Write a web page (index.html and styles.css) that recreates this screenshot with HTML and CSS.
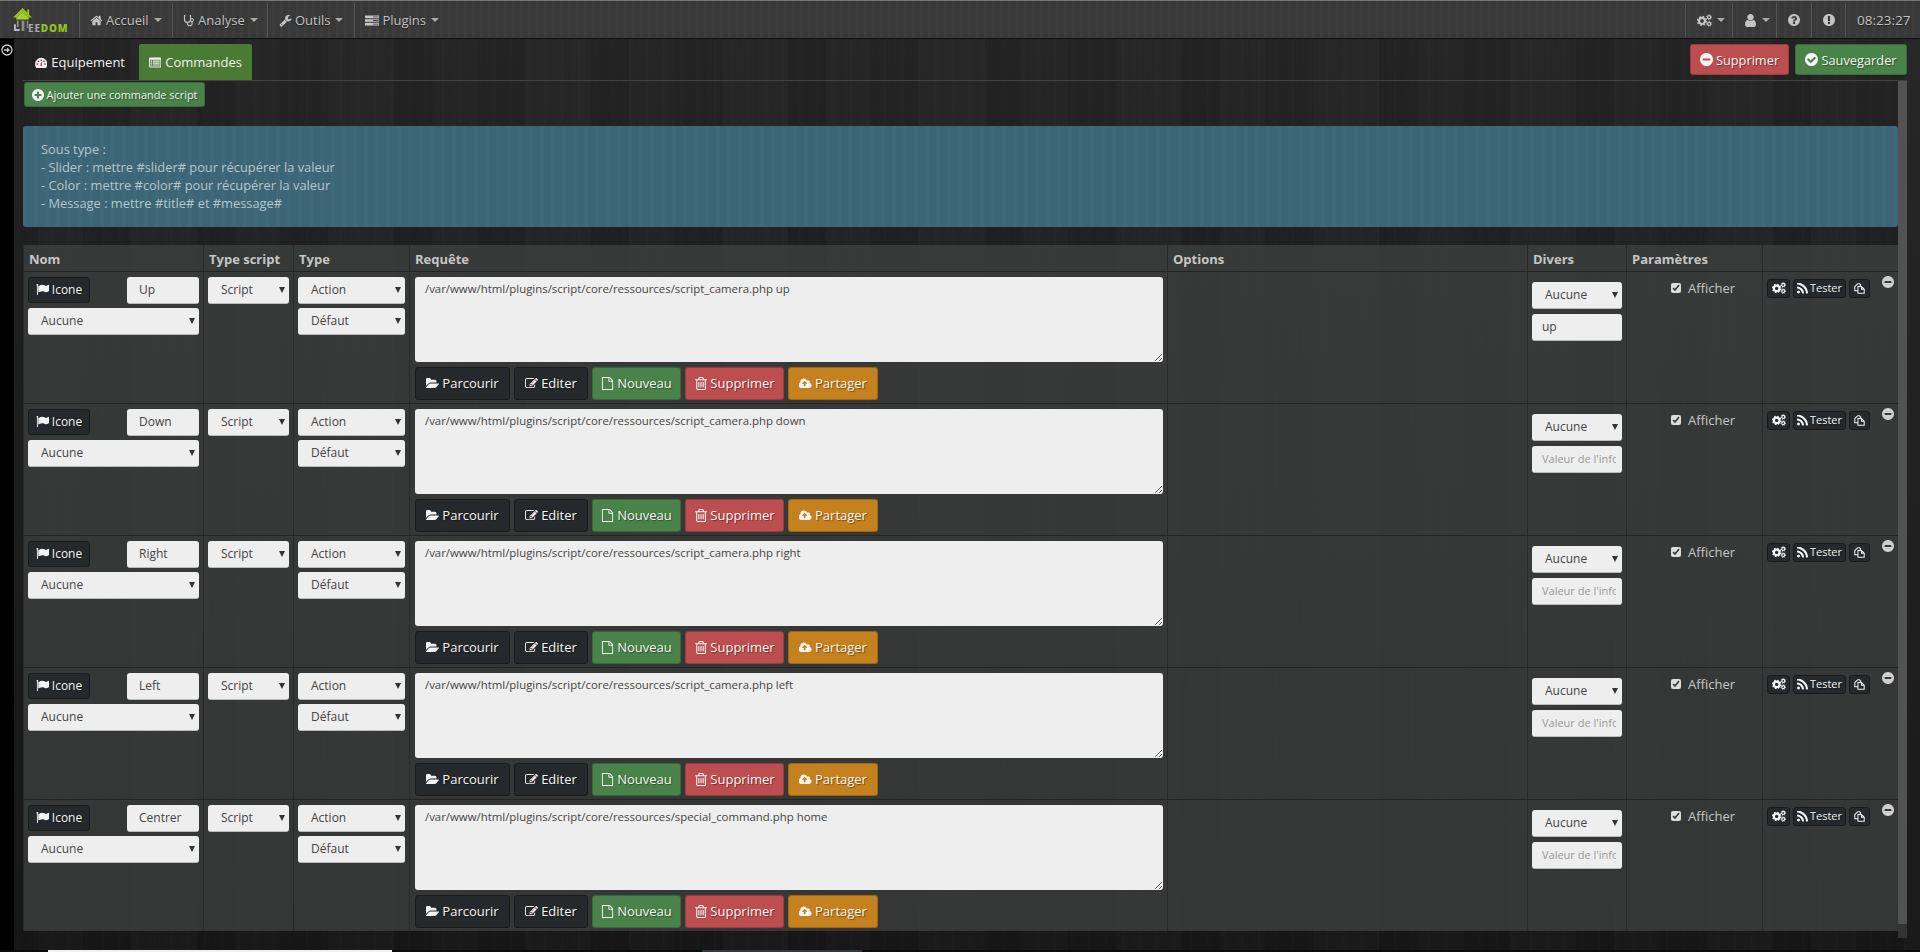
FILE: index.html
```html
<!DOCTYPE html>
<html lang="fr">
<head>
<meta charset="utf-8">
<title>Jeedom - Script</title>
<link rel="stylesheet" href="styles.css">
</head>
<body>
<svg class="defs" aria-hidden="true">
  <symbol id="i-home" viewBox="0 0 1792 1792"><path d="M1472 992v480q0 26-19 45t-45 19h-384v-384h-256v384h-384q-26 0-45-19t-19-45v-480q0-1 .5-3t.5-3l575-474 575 474q1 2 1 6zm223-69l-62 74q-8 9-21 11h-3q-13 0-21-7l-692-577-692 577q-12 8-24 7-13-2-21-11l-62-74q-8-10-7-23.500t11-21.500l719-599q32-26 76-26t76 26l244 204v-195q0-14 9-23t23-9h192q14 0 23 9t9 23v408l219 182q10 8 11 21.500t-7 23.500z"/></symbol>
  <symbol id="i-steth" viewBox="0 0 16 16"><path d="M3 1.500H2v5a4 4 0 0 0 8 0v-5H9M6 10.500v1.500a3 3 0 0 0 6 0V9.500" fill="none" stroke="currentColor" stroke-width="1.500"/><circle cx="12" cy="7.500" r="2" fill="none" stroke="currentColor" stroke-width="1.300"/></symbol>
  <symbol id="i-wrench" viewBox="0 0 1792 1792"><path d="M448 1472q0-26-19-45t-45-19-45 19-19 45 19 45 45 19 45-19 19-45zm644-420l-682 682q-37 37-90 37-52 0-91-37l-106-108q-38-36-38-90 0-53 38-91l681-681q39 98 114.500 173.500t173.500 114.500zm634-435q0 39-23 106-47 134-164.500 217.500t-258.500 83.500q-185 0-316.500-131.500t-131.500-316.500 131.500-316.500 316.500-131.500q58 0 121.500 16.500t107.500 46.500q16 11 16 28t-16 28l-293 169v224l193 107q5-3 79-48.500t135.500-81 70.500-35.500q15 0 23.500 10t8.500 25z"/></symbol>
  <symbol id="i-server" viewBox="0 0 16 11"><path d="M0 0h16v3H0zM0 4h16v3H0zM0 8h16v3H0zM9 1v1h6V1zM9 5v1h6V5zM9 9v1h6V9z" fill-rule="evenodd"/></symbol>
  <symbol id="i-gauge" viewBox="0 0 16 14"><path d="M8 1a8 8 0 0 0-8 8c0 1.800.6 3.400 1.500 4.700.2.200.4.300.7.300h11.600c.3 0 .5-.1.700-.3.900-1.300 1.500-2.900 1.500-4.700a8 8 0 0 0-8-8z"/><g fill="#23282a"><circle cx="3" cy="9" r="1"/><circle cx="4.500" cy="5.500" r="1"/><circle cx="8" cy="4" r="1"/><circle cx="11.500" cy="5.500" r="1"/><circle cx="13" cy="9" r="1"/></g><path d="M7 11.500l.8-5 1.200.2-.3 5z" fill="#c22"/></symbol>
  <symbol id="i-list" viewBox="0 0 16 13"><path d="M0 1.500A1.500 1.500 0 0 1 1.500 0h13A1.500 1.500 0 0 1 16 1.500v10a1.500 1.500 0 0 1-1.500 1.500h-13A1.500 1.500 0 0 1 0 11.500z"/><path d="M1.200 3h13.600v8.800H1.200z" fill="#4a7a34"/><path d="M2 4h2v1.500H2zM5 4h9v1.500H5zM2 6.500h2V8H2zM5 6.500h9V8H5zM2 9h2v1.500H2zM5 9h9v1.500H5z" fill="#eee"/></symbol>
  <symbol id="i-plus" viewBox="128 128 1536 1536"><path d="M1344 960v-128q0-26-19-45t-45-19h-256v-256q0-26-19-45t-45-19h-128q-26 0-45 19t-19 45v256h-256q-26 0-45 19t-19 45v128q0 26 19 45t45 19h256v256q0 26 19 45t45 19h128q26 0 45-19t19-45v-256h256q26 0 45-19t19-45zm320-64q0 209-103 385.500t-279.500 279.500-385.500 103-385.500-103-279.500-279.500-103-385.500 103-385.500 279.500-279.500 385.500-103 385.500 103 279.500 279.500 103 385.500z"/></symbol>
  <symbol id="i-minus" viewBox="128 128 1536 1536"><path d="M1344 960v-128q0-26-19-45t-45-19h-768q-26 0-45 19t-19 45v128q0 26 19 45t45 19h768q26 0 45-19t19-45zm320-64q0 209-103 385.500t-279.500 279.500-385.500 103-385.500-103-279.500-279.500-103-385.500 103-385.500 279.500-279.500 385.500-103 385.500 103 279.500 279.500 103 385.500z"/></symbol>
  <symbol id="i-check" viewBox="128 128 1536 1536"><path d="M1412 734q0-28-18-46l-91-90q-19-19-45-19t-45 19l-408 407-226-226q-19-19-45-19t-45 19l-91 90q-18 18-18 46 0 27 18 45l362 362q19 19 45 19 27 0 46-19l543-543q18-18 18-45zm252 162q0 209-103 385.500t-279.500 279.500-385.500 103-385.500-103-279.500-279.500-103-385.500 103-385.500 279.500-279.500 385.500-103 385.500 103 279.500 279.500 103 385.500z"/></symbol>
  <symbol id="i-quest" viewBox="128 128 1536 1536"><path d="M1024 1376v-192q0-14-9-23t-23-9h-192q-14 0-23 9t-9 23v192q0 14 9 23t23 9h192q14 0 23-9t9-23zm256-672q0-88-55.500-163t-138.500-116-170-41q-243 0-371 213-15 24 8 42l132 100q7 6 19 6 16 0 25-12 53-68 86-92 34-24 86-24 48 0 85.500 26t37.500 59q0 38-20 61t-68 45q-63 28-115.500 86.500t-52.500 125.500v36q0 14 9 23t23 9h192q14 0 23-9t9-23q0-19 21.500-49.500t54.500-49.500q32-18 49-28.500t46-35 44.500-48 28-60.500 12.500-81zm384 192q0 209-103 385.500t-279.500 279.500-385.500 103-385.500-103-279.500-279.500-103-385.500 103-385.500 279.500-279.500 385.500-103 385.500 103 279.500 279.500 103 385.500z"/></symbol>
  <symbol id="i-excl" viewBox="128 128 1536 1536"><path d="M896 128q209 0 385.500 103t279.500 279.500 103 385.500-103 385.500-279.500 279.500-385.500 103-385.500-103-279.500-279.500-103-385.500 103-385.500 279.500-279.500 385.500-103zm128 1247v-190q0-14-9-23.500t-22-9.500h-192q-13 0-23 10t-10 23v190q0 13 10 23t23 10h192q13 0 22-9.500t9-23.500zm-2-344l18-621q0-12-10-18-10-8-24-8h-220q-14 0-24 8-10 6-10 18l17 621q0 10 10 17.500t24 7.500h185q14 0 23.500-7.500t10.500-17.500z"/></symbol>
  <symbol id="i-user" viewBox="256 128 1280 1536"><path d="M1536 1399q0 109-62.500 187t-150.500 78h-854q-88 0-150.500-78t-62.500-187q0-85 8.500-160.500t31.500-152 58.500-131 94-89 134.500-34.500q131 128 313 128t313-128q76 0 134.500 34.500t94 89 58.500 131 31.500 152 8.500 160.500zm-256-887q0 159-112.500 271.500t-271.500 112.500-271.500-112.500-112.500-271.500 112.500-271.500 271.500-112.500 271.500 112.500 112.500 271.500z"/></symbol>
  <symbol id="i-cogs" viewBox="0 0 18 15"><circle cx="6" cy="8" r="3.600" fill="none" stroke="currentColor" stroke-width="2.800"/><circle cx="6" cy="8" r="5.300" fill="none" stroke="currentColor" stroke-width="1.600" stroke-dasharray="2.100 2.060"/><circle cx="14.500" cy="3.500" r="1.900" fill="none" stroke="currentColor" stroke-width="1.500"/><circle cx="14.500" cy="11.500" r="1.900" fill="none" stroke="currentColor" stroke-width="1.500"/><circle cx="14.500" cy="3.500" r="3" fill="none" stroke="currentColor" stroke-width="1" stroke-dasharray="1.200 1.150"/><circle cx="14.500" cy="11.500" r="3" fill="none" stroke="currentColor" stroke-width="1" stroke-dasharray="1.200 1.150"/></symbol>
  <symbol id="i-flag" viewBox="0 128 1792 1536"><path d="M320 256q0 72-64 110v1266q0 13-9.500 22.500t-22.500 9.500h-64q-13 0-22.500-9.500t-9.500-22.500v-1266q-64-38-64-110 0-53 37.500-90.500t90.500-37.500 90.500 37.500 37.500 90.500zm1472 64v763q0 25-12.500 38.500t-39.500 27.500q-215 116-369 116-61 0-123.500-22t-108.500-48-115.500-48-142.500-22q-192 0-464 146-17 9-33 9-26 0-45-19t-19-45v-742q0-32 31-55 21-14 79-43 236-120 421-120 107 0 200 29t219 88q38 19 88 19 54 0 117.500-21t110-47 88-47 54.500-21q26 0 45 19t19 45z"/></symbol>
  <symbol id="i-folder" viewBox="0 192 1824 1408"><path d="M1815 952q0 31-31 66l-336 396q-43 51-120.500 86.500t-143.500 35.500h-1088q-34 0-60.500-13t-26.500-43q0-31 31-66l336-396q43-51 120.500-86.500t143.500-35.500h1088q34 0 60.500 13t26.500 43zm-343-344v160h-832q-94 0-197 47.500t-164 119.500l-337 396-5 6q0-4-.5-12.500t-.5-12.500v-960q0-92 66-158t158-66h320q92 0 158 66t66 158v32h544q92 0 158 66t66 158z"/></symbol>
  <symbol id="i-edit" viewBox="0 128 1800 1536"><path d="M888 1184l116-116-152-152-116 116v56h96v96h56zm440-720q-16-16-33 1l-350 350q-17 17-1 33t33-1l350-350q17-17 1-33zm80 594v190q0 119-84.500 203.500t-203.500 84.500h-832q-119 0-203.500-84.500t-84.500-203.500v-832q0-119 84.500-203.500t203.500-84.500h832q63 0 117 25 15 7 18 23 3 17-9 29l-49 49q-14 14-32 8-23-6-45-6h-832q-66 0-113 47t-47 113v832q0 66 47 113t113 47h832q66 0 113-47t47-113v-126q0-13 9-22l64-64q15-15 35-7t20 29zm-96-738l288 288-672 672h-288v-288zm444 132l-92 92-288-288 92-92q28-28 68-28t68 28l152 152q28 28 28 68t-28 68z"/></symbol>
  <symbol id="i-file" viewBox="128 0 1536 1792"><path d="M1596 380q28 28 48 76t20 88v1152q0 40-28 68t-68 28h-1344q-40 0-68-28t-28-68v-1600q0-40 28-68t68-28h896q40 0 88 20t76 48zm-444-244v376h376q-10-29-22-41l-313-313q-12-12-41-22zm384 1528v-1024h-416q-40 0-68-28t-28-68v-416h-768v1536h1280z"/></symbol>
  <symbol id="i-trash" viewBox="128 128 1408 1536"><path d="M704 736v576q0 14-9 23t-23 9h-64q-14 0-23-9t-9-23v-576q0-14 9-23t23-9h64q14 0 23 9t9 23zm256 0v576q0 14-9 23t-23 9h-64q-14 0-23-9t-9-23v-576q0-14 9-23t23-9h64q14 0 23 9t9 23zm256 0v576q0 14-9 23t-23 9h-64q-14 0-23-9t-9-23v-576q0-14 9-23t23-9h64q14 0 23 9t9 23zm128 724v-948h-896v948q0 22 7 40.500t14.500 27 10.500 8.500h832q3 0 10.500-8.500t14.500-27 7-40.500zm-672-1076h448l-48-117q-7-9-17-11h-317q-10 2-17 11zm928 32v64q0 14-9 23t-23 9h-96v948q0 83-47 143.500t-113 60.500h-832q-66 0-113-58.500t-47-141.500v-952h-96q-14 0-23-9t-9-23v-64q0-14 9-23t23-9h309l70-167q15-37 54-63t79-26h320q40 0 79 26t54 63l70 167h309q14 0 23 9t9 23z"/></symbol>
  <symbol id="i-cloud" viewBox="0 192 1920 1344"><path d="M1216 864q0-14-9-23l-352-352q-9-9-23-9t-23 9l-351 351q-10 12-10 24 0 14 9 23t23 9h224v352q0 13 9.500 22.500t22.500 9.500h192q13 0 22.500-9.500t9.500-22.500v-352h224q13 0 22.500-9.500t9.500-22.500zm640 288q0 159-112.500 271.500t-271.500 112.500h-1088q-185 0-316.500-131.500t-131.500-316.500q0-130 70-240t188-165q-2-30-2-43 0-212 150-362t362-150q156 0 285.500 87t188.500 231q71-62 166-62 106 0 181 75t75 181q0 76-41 138 130 31 213.500 135.500t83.500 238.500z"/></symbol>
  <symbol id="i-rss" viewBox="192 256 1408 1280"><path d="M576 1344q0 80-56 136t-136 56-136-56-56-136 56-136 136-56 136 56 56 136zm512 123q2 28-17 48-18 21-47 21h-135q-25 0-43-16.500t-20-41.500q-22-229-184.500-391.500t-391.500-184.500q-25-2-41.500-20t-16.500-43v-135q0-29 21-47 17-17 43-17h5q160 13 306 80.500t259 181.500q114 113 181.500 259t80.500 306zm512 2q2 27-18 47-18 20-46 20h-143q-26 0-44.500-17.500t-19.500-42.500q-12-215-101-408.500t-231.500-336-336-231.500-408.500-102q-25-1-42.500-19.500t-17.500-43.500v-143q0-28 20-46 18-18 44-18h3q262 13 501.500 120t425.500 294q187 186 294 425.500t120 501.500z"/></symbol>
  <symbol id="i-copy" viewBox="0 0 14 14"><path d="M4.500 1H7l1.500 1.500V4H7M4.500 1L1 4.500V10h3.500M5 4.500h4.500L13 8v5H5zM9.500 4.500V8H13" fill="none" stroke="currentColor" stroke-width="1.300"/></symbol>
</svg>

<!--barre de navigation-->
<nav class="navbar">
  <a class="brand">
    <svg class="brand-house" viewBox="0 0 20 24"><path d="M10 0L0 10h3.500L10 4.500 16.500 10H20l-3-3V1.500h-2v3z" fill="#94c11f"/><path d="M3.500 10L10 4.500 16.500 10v2h-13z" fill="#a8d02a"/><path d="M4 13h2v7H4zM9 13h3v11H9zM14.500 13H16v8h-1.500z" fill="#8a8a8a"/><path d="M1 17h2v5h4v2H1z" fill="#bdbdbd"/></svg>
    <span class="brand-text">EE<b>DOM</b></span>
  </a>
  <a class="nav-item nav-accueil"><svg class="ic"><use href="#i-home"/></svg> Accueil <i class="caret"></i></a>
  <a class="nav-item nav-analyse"><svg class="ic"><use href="#i-steth"/></svg> Analyse <i class="caret"></i></a>
  <a class="nav-item nav-outils"><svg class="ic"><use href="#i-wrench"/></svg> Outils <i class="caret"></i></a>
  <a class="nav-item nav-plugins"><svg class="ic ic-wide"><use href="#i-server"/></svg> Plugins <i class="caret"></i></a>
  <span class="nav-space"></span>
  <a class="nav-item nav-cogs"><svg class="ic ic-wide"><use href="#i-cogs"/></svg><i class="caret"></i></a>
  <a class="nav-item nav-user"><svg class="ic"><use href="#i-user"/></svg><i class="caret"></i></a>
  <a class="nav-item nav-help"><svg class="ic"><use href="#i-quest"/></svg></a>
  <a class="nav-item nav-help2"><svg class="ic"><use href="#i-excl"/></svg></a>
  <span class="nav-item nav-clock">08:23:27</span>
</nav>

<div class="wrap">
  <aside class="side"><svg class="side-toggle" viewBox="0 0 12 12"><circle cx="6" cy="6" r="5" fill="none" stroke="#ccc" stroke-width="1.300"/><path d="M3 5.200h3V3.500L9 6 6 8.500V6.800H3z" fill="#ccc"/></svg></aside>
  <main class="main">
    <div class="tabbar">
      <ul class="tabs">
        <li class="tab"><svg class="ic ic-wide"><use href="#i-gauge"/></svg> Equipement</li>
        <li class="tab active"><svg class="ic ic-wide"><use href="#i-list"/></svg> Commandes</li>
      </ul>
      <div class="top-actions">
        <a class="btn btn-big red"><svg class="ic"><use href="#i-minus"/></svg> Supprimer</a>
        <a class="btn btn-big green"><svg class="ic"><use href="#i-check"/></svg> Sauvegarder</a>
      </div>
    </div>
    <div class="panel">
      <div class="panel-body">
        <a class="btn btn-add green"><svg class="ic"><use href="#i-plus"/></svg> Ajouter une commande script</a>
        <div class="alert">
          Sous type :<br>
          - Slider : mettre #slider# pour récupérer la valeur<br>
          - Color : mettre #color# pour récupérer la valeur<br>
          - Message : mettre #title# et #message#
        </div>
        <table class="cmds">
          <colgroup>
            <col class="c-nom"><col class="c-script"><col class="c-type"><col class="c-req"><col class="c-opt"><col class="c-div"><col class="c-par"><col class="c-act">
          </colgroup>
          <thead>
            <tr><th>Nom</th><th>Type script</th><th>Type</th><th>Requête</th><th>Options</th><th>Divers</th><th>Paramètres</th><th></th></tr>
          </thead>
          <tbody>
            <tr>
              <td>
                <div class="nom-top"><a class="btn btn-sm dark"><svg class="ic"><use href="#i-flag"/></svg> Icone</a><input class="field f-nom" value="Up"></div>
                <label class="sel"><select><option>Aucune</option></select></label>
              </td>
              <td><label class="sel"><select><option>Script</option></select></label></td>
              <td><label class="sel"><select><option>Action</option></select></label><label class="sel"><select><option>Défaut</option></select></label></td>
              <td>
                <textarea class="req">/var/www/html/plugins/script/core/ressources/script_camera.php up</textarea>
                <div class="req-btns"><a class="btn dark"><svg class="ic"><use href="#i-folder"/></svg> Parcourir</a><a class="btn dark"><svg class="ic"><use href="#i-edit"/></svg> Editer</a><a class="btn green"><svg class="ic"><use href="#i-file"/></svg> Nouveau</a><a class="btn red"><svg class="ic"><use href="#i-trash"/></svg> Supprimer</a><a class="btn orange"><svg class="ic"><use href="#i-cloud"/></svg> Partager</a></div>
              </td>
              <td></td>
              <td class="td-div"><label class="sel"><select><option>Aucune</option></select></label><input class="field" value="up" placeholder="Valeur de l'information"></td>
              <td class="td-par"><label class="chk"><input type="checkbox" checked> Afficher</label></td>
              <td class="td-act">
                <a class="btn btn-xs dark"><svg class="ic"><use href="#i-cogs"/></svg></a><a class="btn btn-xs dark"><svg class="ic"><use href="#i-rss"/></svg> Tester</a><a class="btn btn-xs dark"><svg class="ic"><use href="#i-copy"/></svg></a>
                <svg class="ic rm"><use href="#i-minus"/></svg>
              </td>
            </tr>
            <tr>
              <td>
                <div class="nom-top"><a class="btn btn-sm dark"><svg class="ic"><use href="#i-flag"/></svg> Icone</a><input class="field f-nom" value="Down"></div>
                <label class="sel"><select><option>Aucune</option></select></label>
              </td>
              <td><label class="sel"><select><option>Script</option></select></label></td>
              <td><label class="sel"><select><option>Action</option></select></label><label class="sel"><select><option>Défaut</option></select></label></td>
              <td>
                <textarea class="req">/var/www/html/plugins/script/core/ressources/script_camera.php down</textarea>
                <div class="req-btns"><a class="btn dark"><svg class="ic"><use href="#i-folder"/></svg> Parcourir</a><a class="btn dark"><svg class="ic"><use href="#i-edit"/></svg> Editer</a><a class="btn green"><svg class="ic"><use href="#i-file"/></svg> Nouveau</a><a class="btn red"><svg class="ic"><use href="#i-trash"/></svg> Supprimer</a><a class="btn orange"><svg class="ic"><use href="#i-cloud"/></svg> Partager</a></div>
              </td>
              <td></td>
              <td class="td-div"><label class="sel"><select><option>Aucune</option></select></label><input class="field" placeholder="Valeur de l'information"></td>
              <td class="td-par"><label class="chk"><input type="checkbox" checked> Afficher</label></td>
              <td class="td-act">
                <a class="btn btn-xs dark"><svg class="ic"><use href="#i-cogs"/></svg></a><a class="btn btn-xs dark"><svg class="ic"><use href="#i-rss"/></svg> Tester</a><a class="btn btn-xs dark"><svg class="ic"><use href="#i-copy"/></svg></a>
                <svg class="ic rm"><use href="#i-minus"/></svg>
              </td>
            </tr>
            <tr>
              <td>
                <div class="nom-top"><a class="btn btn-sm dark"><svg class="ic"><use href="#i-flag"/></svg> Icone</a><input class="field f-nom" value="Right"></div>
                <label class="sel"><select><option>Aucune</option></select></label>
              </td>
              <td><label class="sel"><select><option>Script</option></select></label></td>
              <td><label class="sel"><select><option>Action</option></select></label><label class="sel"><select><option>Défaut</option></select></label></td>
              <td>
                <textarea class="req">/var/www/html/plugins/script/core/ressources/script_camera.php right</textarea>
                <div class="req-btns"><a class="btn dark"><svg class="ic"><use href="#i-folder"/></svg> Parcourir</a><a class="btn dark"><svg class="ic"><use href="#i-edit"/></svg> Editer</a><a class="btn green"><svg class="ic"><use href="#i-file"/></svg> Nouveau</a><a class="btn red"><svg class="ic"><use href="#i-trash"/></svg> Supprimer</a><a class="btn orange"><svg class="ic"><use href="#i-cloud"/></svg> Partager</a></div>
              </td>
              <td></td>
              <td class="td-div"><label class="sel"><select><option>Aucune</option></select></label><input class="field" placeholder="Valeur de l'information"></td>
              <td class="td-par"><label class="chk"><input type="checkbox" checked> Afficher</label></td>
              <td class="td-act">
                <a class="btn btn-xs dark"><svg class="ic"><use href="#i-cogs"/></svg></a><a class="btn btn-xs dark"><svg class="ic"><use href="#i-rss"/></svg> Tester</a><a class="btn btn-xs dark"><svg class="ic"><use href="#i-copy"/></svg></a>
                <svg class="ic rm"><use href="#i-minus"/></svg>
              </td>
            </tr>
            <tr>
              <td>
                <div class="nom-top"><a class="btn btn-sm dark"><svg class="ic"><use href="#i-flag"/></svg> Icone</a><input class="field f-nom" value="Left"></div>
                <label class="sel"><select><option>Aucune</option></select></label>
              </td>
              <td><label class="sel"><select><option>Script</option></select></label></td>
              <td><label class="sel"><select><option>Action</option></select></label><label class="sel"><select><option>Défaut</option></select></label></td>
              <td>
                <textarea class="req">/var/www/html/plugins/script/core/ressources/script_camera.php left</textarea>
                <div class="req-btns"><a class="btn dark"><svg class="ic"><use href="#i-folder"/></svg> Parcourir</a><a class="btn dark"><svg class="ic"><use href="#i-edit"/></svg> Editer</a><a class="btn green"><svg class="ic"><use href="#i-file"/></svg> Nouveau</a><a class="btn red"><svg class="ic"><use href="#i-trash"/></svg> Supprimer</a><a class="btn orange"><svg class="ic"><use href="#i-cloud"/></svg> Partager</a></div>
              </td>
              <td></td>
              <td class="td-div"><label class="sel"><select><option>Aucune</option></select></label><input class="field" placeholder="Valeur de l'information"></td>
              <td class="td-par"><label class="chk"><input type="checkbox" checked> Afficher</label></td>
              <td class="td-act">
                <a class="btn btn-xs dark"><svg class="ic"><use href="#i-cogs"/></svg></a><a class="btn btn-xs dark"><svg class="ic"><use href="#i-rss"/></svg> Tester</a><a class="btn btn-xs dark"><svg class="ic"><use href="#i-copy"/></svg></a>
                <svg class="ic rm"><use href="#i-minus"/></svg>
              </td>
            </tr>
            <tr>
              <td>
                <div class="nom-top"><a class="btn btn-sm dark"><svg class="ic"><use href="#i-flag"/></svg> Icone</a><input class="field f-nom" value="Centrer"></div>
                <label class="sel"><select><option>Aucune</option></select></label>
              </td>
              <td><label class="sel"><select><option>Script</option></select></label></td>
              <td><label class="sel"><select><option>Action</option></select></label><label class="sel"><select><option>Défaut</option></select></label></td>
              <td>
                <textarea class="req">/var/www/html/plugins/script/core/ressources/special_command.php home</textarea>
                <div class="req-btns"><a class="btn dark"><svg class="ic"><use href="#i-folder"/></svg> Parcourir</a><a class="btn dark"><svg class="ic"><use href="#i-edit"/></svg> Editer</a><a class="btn green"><svg class="ic"><use href="#i-file"/></svg> Nouveau</a><a class="btn red"><svg class="ic"><use href="#i-trash"/></svg> Supprimer</a><a class="btn orange"><svg class="ic"><use href="#i-cloud"/></svg> Partager</a></div>
              </td>
              <td></td>
              <td class="td-div"><label class="sel"><select><option>Aucune</option></select></label><input class="field" placeholder="Valeur de l'information"></td>
              <td class="td-par"><label class="chk"><input type="checkbox" checked> Afficher</label></td>
              <td class="td-act">
                <a class="btn btn-xs dark"><svg class="ic"><use href="#i-cogs"/></svg></a><a class="btn btn-xs dark"><svg class="ic"><use href="#i-rss"/></svg> Tester</a><a class="btn btn-xs dark"><svg class="ic"><use href="#i-copy"/></svg></a>
                <svg class="ic rm"><use href="#i-minus"/></svg>
              </td>
            </tr>
          </tbody>
        </table>
      </div>
      <div class="strip"></div>
    </div>
  </main>
</div>
<div class="foot"><span class="foot-a"></span><span class="foot-b"></span></div>
</body>
</html>
```

FILE: styles.css
```css
*{box-sizing: border-box;}
html,body{margin: 0;padding: 0;height: 100%;overflow: hidden;}
body{display: flex;flex-direction: column;height: 952px;font: 13px/18px "Open Sans","Liberation Sans",sans-serif;color: #e6e6e6;
  background-color: #1c1c1c;
  background-image:
    repeating-linear-gradient(90deg,rgba(255,255,255,.006) 0 2px,transparent 2px 7px,rgba(0,0,0,.03) 7px 9px,transparent 9px 17px),
    repeating-linear-gradient(90deg,rgba(0,0,0,.05) 0 38px,rgba(255,255,255,.008) 38px 83px,rgba(0,0,0,.03) 83px 131px,rgba(255,255,255,.012) 131px 197px),
    linear-gradient(180deg,#252525 0,#171717 100%);}
a{color: inherit;text-decoration: none;}
.defs{position: absolute;width: 0;height: 0;}
.ic{display: inline-block;width: 13px;height: 13px;fill: currentColor;vertical-align: -2px;}
.ic-wide{width: 15px;}

/*barre du haut*/
.navbar{display: flex;flex: none;height: 39px;padding-top: 2px;border-top: 1px solid #777;border-bottom: 1px solid #0d0d0d;background: #3a3a3a;background-image: repeating-linear-gradient(90deg,rgba(255,255,255,.012) 0 3px,rgba(0,0,0,.03) 3px 8px);color: #c4c4c4;font-size: 13px;}
.brand{position: relative;width: 79px;padding: 5px 0 0 13px;flex: none;}
.brand-house{width: 19px;height: 23px;display: block;}
.brand-text{position: absolute;left: 28px;top: 19px;font-size: 10px;font-weight: 700;letter-spacing: .8px;line-height: 12px;color: #aaa;}
.brand-text b{color: #94c11f;}
.nav-item{display: flex;align-items: center;gap: 3px;padding: 0 0 1px 11px;border-left: 1px solid #555;flex: none;text-shadow: 0 1px 1px rgba(0,0,0,.5);}
.nav-accueil{width: 93px;padding-left: 10px;}
.nav-analyse{width: 95px;padding-left: 10px;}
.nav-analyse .ic{width: 12px;}
.nav-outils{width: 87px;}
.nav-plugins{width: 85px;padding-left: 10px;}
.nav-space{flex: 1;}
.nav-cogs{width: 47px;}
.nav-user{width: 44px;}
.nav-help{width: 35px;}
.nav-help2{width: 34px;}
.nav-clock{width: 75px;font-size: 13.500px;}
.nav-cogs .ic{width: 15px;}
.nav-help .ic,.nav-help2 .ic{width: 12px;height: 12px;}
.caret{display: inline-block;width: 0;height: 0;margin-left: 2px;border-top: 4px solid #aaa;border-left: 4px solid transparent;border-right: 4px solid transparent;}

/*structure*/
.wrap{display: flex;flex: 1;min-height: 0;}
.side{flex: none;width: 14px;background: #000;padding: 5px 0 0 1px;}
.side-toggle{display: block;width: 12px;height: 12px;}
.main{flex: 1;min-width: 0;padding: 5px 13px 0 9px;}
.tabbar{display: flex;justify-content: space-between;height: 36px;}
.tabs{display: flex;margin: 0;padding: 0;list-style: none;}
.tab{display: flex;align-items: center;gap: 4px;height: 36px;padding: 0 14px 0 12px;width: 116px;color: #f2f2f2;font-size: 13px;white-space: nowrap;}
.tab.active{background: #4a7a34;border-radius: 2px 2px 0 0;width: 113px;padding: 0 10px;}
.top-actions{display: flex;gap: 6px;}

/*boutons*/
.btn{display: inline-flex;align-items: center;justify-content: center;gap: 3px;height: 33px;border-radius: 3px;border: 1px solid rgba(0,0,0,.2);font-size: 13px;color: #f4f4f4;text-shadow: 1px 1px 1px rgba(0,0,0,.4);white-space: nowrap;}
.btn-big{height: 31px;font-size: 12.800px;}
.top-actions .red{width: 99px;}
.top-actions .green{width: 112px;}
.red{background: #bc4e4f;}
.green{background: #4a8349;}
.orange{background: #c5811e;}
.dark{background: #25292b;border-color: #1a1a1a;}
.btn-add{width: 181px;height: 25px;margin: 1px 0 0 1px;font-size: 10.900px;}
.btn-add .ic{width: 12px;height: 12px;}
.btn-sm{width: 62px;height: 26px;font-size: 12px;}
.btn-xs{height: 19px;font-size: 11px;padding: 0 4px;}
.btn-xs .ic{width: 11px;height: 11px;}
.btn-xs:nth-child(1) .ic{width: 14px;height: 12px;}

/*panneau commandes*/
.panel{display: flex;border-top: 1px solid #414141;height: 0;min-height: 860px;}
.panel-body{width: 1875px;flex: none;}
.strip{width: 10px;height: 857px;background: linear-gradient(180deg,#525252 0,#525252 843px,#333 843px);}
.alert{height: 101px;margin-top: 19px;padding: 14px 18px;border-radius: 3px;background: #3d6777;background-image: repeating-linear-gradient(90deg,rgba(255,255,255,.01) 0 4px,rgba(0,0,0,.015) 4px 11px);color: #b4c6ce;font-size: 12.850px;line-height: 18px;}

/*tableau*/
.cmds{width: 1874px;margin-top: 18px;table-layout: fixed;border-collapse: collapse;background: rgba(64,66,65,.74);}
.c-nom{width: 180px;}
.c-script{width: 90px;}
.c-type{width: 116px;}
.c-req{width: 758px;}
.c-opt{width: 360px;}
.c-div{width: 99px;}
.c-par{width: 136px;}
.c-act{width: 135px;}
.cmds th{height: 26px;padding: 2px 5px 0;text-align: left;color: #c6c6c6;font-size: 13px;font-weight: 700;border-bottom: 1px solid #232323;border-left: 1px solid #2a2a2a;}
.cmds td{height: 132px;padding: 5px 4px 0;vertical-align: top;border-bottom: 1px solid #232323;border-left: 1px solid #2a2a2a;}
.cmds tr:last-child td{border-bottom: none;}
.nom-top{display: flex;justify-content: space-between;margin-bottom: 4px;}
.field{display: block;width: 100%;height: 27px;padding: 0 6px 0 10px;border: none;border-bottom: 1px solid #bbb;border-radius: 3px;background: #eee;color: #444;font: 12px "Open Sans","Liberation Sans",sans-serif;}
.field::placeholder{color: #999;font-size: 11px;}
.f-nom{width: 72px;padding-left: 12px;}
.sel{position: relative;display: block;margin-bottom: 4px;}
.sel select{display: block;width: 100%;height: 27px;padding: 0 13px;border: none;border-bottom: 1px solid #bbb;border-radius: 3px;background: #eee;color: #444;font: 12px "Open Sans","Liberation Sans",sans-serif;appearance: none;-webkit-appearance: none;}
.sel::after{content: "";position: absolute;right: 4px;top: 10px;border-top: 6px solid #333;border-left: 3px solid transparent;border-right: 3px solid transparent;}
.req{display: block;width: 748px;height: 85px;margin-left: 1px;padding: 4px 10px;border: none;border-radius: 3px;background: #eee;color: #444;font: 11.400px/16px "Open Sans","Liberation Sans",sans-serif;}
.req-btns{display: flex;gap: 4px;margin: 5px 0 0 1px;}
.req-btns .btn:nth-child(1){width: 95px;}
.req-btns .btn:nth-child(2){width: 74px;}
.req-btns .btn:nth-child(3){width: 89px;}
.req-btns .btn:nth-child(4){width: 99px;}
.req-btns .btn:nth-child(5){width: 90px;}
.td-div{padding: 10px 4px 0 !important;}
.td-div .field{width: 90px;}
.td-div .sel{width: 90px;margin-bottom: 5px;}
.td-par{padding: 7px 0 0 44px !important;}
.chk{display: flex;align-items: center;gap: 7px;color: #c6c6c6;font-size: 13px;}
.chk input{width: 10px;height: 10px;margin: 0;accent-color: #ddd;}
.td-act{position: relative;padding: 7px 0 0 4px !important;white-space: nowrap;}
.td-act .btn{margin-right: 3px;vertical-align: top;}
.btn-xs:nth-child(1){width: 23px;padding: 0;}
.btn-xs:nth-child(2){width: 53px;padding: 0;gap: 2px;}
.btn-xs:nth-child(3){width: 21px;padding: 0;}
.rm{position: absolute;top: 4px;right: 4px;width: 12px;height: 12px;color: #d0d0d0;}

/*bas*/
.foot{display: flex;flex: none;height: 2px;background: #0b0b0b;}
.foot-a{width: 344px;margin-left: 48px;background: #f2f2f2;}
.foot-b{width: 160px;margin-left: 310px;background: #2e3a3a;}
```
